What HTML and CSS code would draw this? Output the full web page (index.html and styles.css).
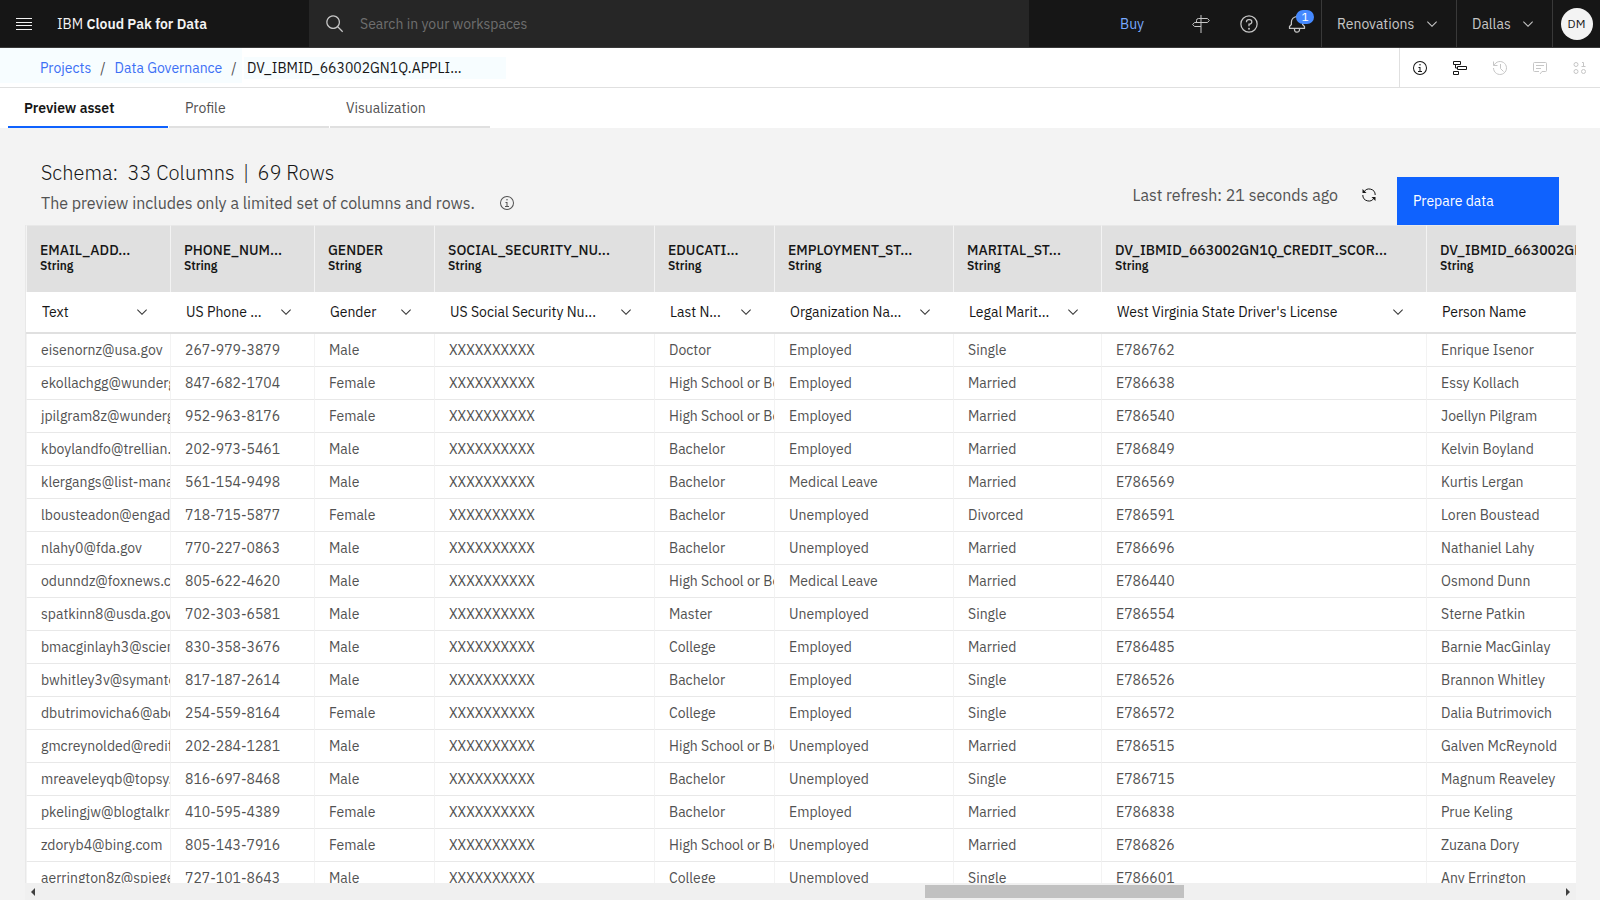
FILE: index.html
```html
<!DOCTYPE html>
<html lang="en">
<head>
<meta charset="utf-8">
<title>IBM Cloud Pak for Data</title>
<link rel="stylesheet" href="styles.css">
</head>
<body>
<svg class="defs" aria-hidden="true">
  <symbol id="chevron" viewBox="0 0 32 32"><path d="M16 22L6 12 7.4 10.6 16 19.2 24.6 10.6 26 12z"/></symbol>
  <symbol id="info" viewBox="0 0 32 32"><path d="M17 22v-8h-4v2h2v6h-3v2h8v-2zM16 8a1.5 1.5 0 1 0 1.5 1.5A1.5 1.5 0 0 0 16 8z"/><path d="M16 30a14 14 0 1 1 14-14 14 14 0 0 1-14 14zm0-26a12 12 0 1 0 12 12A12 12 0 0 0 16 4z"/></symbol>
</svg>
<header class="topbar">
  <div class="brand-area">
    <button class="menu" aria-label="Menu"><svg width="16" height="12"><path d="M0 0h16v1H0zM0 4h16v1H0zM0 7h16v1H0zM0 11h16v1H0z"/></svg></button>
    <a class="brand" href="#">IBM <b>Cloud Pak for Data</b></a>
  </div>
  <label class="search">
    <svg width="20" height="20" viewBox="0 0 32 32"><path d="M29 27.586l-7.552-7.552a11.018 11.018 0 1 0-1.414 1.414L27.586 29zM4 13a9 9 0 1 1 9 9 9.01 9.01 0 0 1-9-9z"/></svg>
    <input type="text" placeholder="Search in your workspaces" aria-label="Search in your workspaces">
  </label>
  <a class="buy" href="#">Buy</a>
  <nav class="top-actions">
    <button aria-label="Directions"><svg width="20" height="20" viewBox="0 0 20 20" class="line"><path d="M10 1v18M10 4.500h6.500l1.800 2-1.800 2H3.500l-1.800 2 1.800 2H10M5.500 8.500v-2q0-2 2-2H10M10 12.500"/></svg></button>
    <button aria-label="Help"><svg width="20" height="20" viewBox="0 0 32 32"><path d="M16 2a14 14 0 1 0 14 14A14 14 0 0 0 16 2zm0 26a12 12 0 1 1 12-12 12 12 0 0 1-12 12z"/><circle cx="16" cy="23.500" r="1.500"/><path d="M17 8h-1.500a4.490 4.490 0 0 0-4.500 4.500v.5h2v-.5a2.500 2.500 0 0 1 2.500-2.500H17a2.500 2.500 0 0 1 0 5h-2v4.500h2V17a4.500 4.500 0 0 0 0-9z"/></svg></button>
    <button class="bell" aria-label="Notifications"><svg width="20" height="20" viewBox="0 0 32 32"><path d="M28.707 19.293L26 16.586V13a10.014 10.014 0 0 0-9-9.950V1h-2v2.050A10.014 10.014 0 0 0 6 13v3.586l-2.707 2.707A1 1 0 0 0 3 20v3a1 1 0 0 0 1 1h7v.777a5.152 5.152 0 0 0 4.500 5.199A5.006 5.006 0 0 0 21 25v-1h7a1 1 0 0 0 1-1v-3a1 1 0 0 0-.293-.707zM19 25a3 3 0 0 1-6 0v-1h6zm8-3H5v-1.586l2.707-2.707A1 1 0 0 0 8 17v-4a8 8 0 0 1 16 0v4a1 1 0 0 0 .293.707L27 20.414z"/></svg><span class="badge">1</span></button>
  </nav>
  <div class="picker account"><select aria-label="Account"><option>Renovations</option></select><svg width="16" height="16"><use href="#chevron"/></svg></div>
  <div class="picker region"><select aria-label="Region"><option>Dallas</option></select><svg width="16" height="16"><use href="#chevron"/></svg></div>
  <div class="profile"><button class="avatar" aria-label="Profile">DM</button></div>
</header>

<div class="crumbbar">
  <nav class="crumbs" aria-label="Breadcrumb">
    <div class="trail"><a href="#">Projects</a><span>/</span><a href="#">Data Governance</a><span>/</span></div>
    <div class="current">DV_IBMID_663002GN1Q.APPLI...</div>
  </nav>
  <div class="tools">
    <button aria-label="Information"><svg width="16" height="16"><use href="#info"/></svg></button>
    <button aria-label="Flow"><svg width="16" height="16" class="line"><path d="M1.500 1.500h7v3h-7zM5.500 6.500h9v3h-9zM1.500 11.500h5v3h-5zM3.500 4.500v3.500h2"/></svg></button>
    <button disabled aria-label="History"><svg width="16" height="16" class="line"><path d="M1.500 1.500v4h4M2 5.500a6.500 6.500 0 1 1-.5 2.500M8.500 4v4.500l3 3"/></svg></button>
    <button disabled aria-label="Comments"><svg width="16" height="16" class="line"><path d="M8 14l2-2.500h3.500a1 1 0 0 0 1-1v-7a1 1 0 0 0-1-1h-11a1 1 0 0 0-1 1v7a1 1 0 0 0 1 1H7M4 5.500h8M4 8.500h5"/></svg></button>
    <button disabled aria-label="Data"><svg width="16" height="16" class="line"><circle cx="4" cy="4.500" r="2"/><circle cx="4" cy="11.500" r="2"/><circle cx="11.500" cy="11.500" r="2"/><path d="M10 2.500h1.500v4M9.500 6.500h4"/></svg></button>
  </div>
</div>

<nav class="tabs">
  <button class="tab active">Preview asset</button>
  <button class="tab">Profile</button>
  <button class="tab">Visualization</button>
</nav>

<main class="content">
  <div class="summary">
    <div class="summary-text">
      <h1>Schema:&nbsp; 33 Columns <span class="bar">|</span> 69 Rows</h1>
      <p>The preview includes only a limited set of columns and rows. <svg width="16" height="16"><use href="#info"/></svg></p>
    </div>
    <div class="refresh">
      <span>Last refresh: 21 seconds ago</span>
      <button aria-label="Refresh"><svg width="16" height="16" class="line"><path d="M3 5A6 6 0 0 1 14.200 8M13 11A6 6 0 0 1 1.800 8"/><path d="M1.500 2v4h4z M14.500 14v-4h-4z" fill="currentColor" stroke="none"/></svg></button>
    </div>
    <button class="primary">Prepare data</button>
  </div>
  <div class="grid">
    <table>
      <colgroup><col class="w144"><col class="w144"><col class="w120"><col class="w220"><col class="w120"><col class="w179"><col class="w148"><col class="w325"><col class="w240"></colgroup>
      <thead><tr class="names" id="names"></tr><tr class="types" id="types"></tr></thead>
      <tbody id="rows"></tbody>
    </table>
  </div>
  <div class="scrollbar" aria-hidden="true"><i class="arrow left"></i><i class="thumb"></i><i class="arrow right"></i></div>
</main>
<script src="table.js"></script>
</body>
</html>
```

FILE: styles.css
```css
* { box-sizing: border-box; }
body {
  margin: 0;
  height: 100vh;
  display: flex;
  flex-direction: column;
  overflow: hidden;
  background: #f3f3f3;
  color: #161616;
  font: 14px/18px "IBM Plex Sans", "Noto Sans", sans-serif;
}
button, select, input { font: inherit; color: inherit; background: none; border: 0; padding: 0; margin: 0; border-radius: 0; }
select { appearance: none; outline: 0; }
a { text-decoration: none; }
svg { display: block; fill: currentColor; flex: none; }
svg.line { fill: none; stroke: currentColor; stroke-width: 1; }
.defs { position: absolute; width: 0; height: 0; }

.topbar { display: flex; flex: none; height: 48px; background: #161616; color: #c6c6c6; border-bottom: 1px solid #393939; }
.brand-area { display: flex; align-items: center; width: 309px; }
.menu { width: 48px; height: 47px; display: grid; place-items: center; color: #f3f3f3; }
.brand { margin-left: 9px; color: #f3f3f3; }
.brand b { font-weight: 600; }
.search { flex: 1; display: flex; align-items: center; gap: 15px; padding-left: 16px; background: #262626; }
.search input { flex: 1; outline: 0; }
.search input::placeholder { color: #6f6f6f; opacity: 1; }
.buy { width: 148px; display: flex; align-items: center; padding-left: 91px; color: #78a9ff; }
.top-actions { display: flex; }
.top-actions button { width: 48px; display: grid; place-items: center; }
.bell { position: relative; }
.badge { position: absolute; left: 23px; top: 10px; width: 18px; height: 14px; border-radius: 7px; background: #4589ff; color: #fff; font-size: 12px; line-height: 14px; text-align: center; }
.picker { display: grid; align-items: center; border-left: 1px solid #393939; }
.picker select, .picker svg { grid-area: 1 / 1; }
.picker select { height: 47px; padding-left: 15px; width: 100%; }
.picker svg { justify-self: end; margin-right: 16px; pointer-events: none; }
.account { width: 135px; }
.region { width: 96px; }
.profile { width: 48px; border-left: 1px solid #393939; display: grid; place-items: center; }
.avatar { width: 32px; height: 32px; border-radius: 50%; background: #f3f3f3; color: #161616; font-size: 12px; }

.crumbbar { display: flex; flex: none; justify-content: space-between; height: 40px; background: #fff; border-bottom: 1px solid #e0e0e0; }
.crumbs { display: flex; align-items: center; gap: 2px; }
.trail { display: flex; align-items: center; gap: 9px; height: 35px; width: 242px; padding: 4px 0 0 40px; background: #f7fdff; color: #525252; align-self: flex-start; }
.trail a { color: #3d70f5; }
.current { width: 262px; padding: 2px 3px; line-height: 18px; background: #f7fdff; }
.tools { display: flex; border-left: 1px solid #e0e0e0; }
.tools button { width: 40px; display: grid; place-items: center; }
.tools button:disabled { color: #c6c6c6; }

.tabs { display: flex; flex: none; gap: 1px; padding-left: 8px; background: #fff; }
.tab { width: 160px; height: 40px; padding: 2px 0 0 16px; text-align: left; color: #525252; border-bottom: 2px solid #e0e0e0; }
.tab.active { color: #161616; font-weight: 600; border-color: #0f62fe; }

.content { flex: 1; min-height: 0; display: flex; flex-direction: column; padding: 0 24px 0 25px; }
.summary { display: flex; flex: none; height: 97px; padding-right: 17px; align-items: flex-end; }
.summary-text { flex: 1; padding: 0 0 10px 16px; }
.summary h1 { margin: 0 0 6px; font-size: 20px; line-height: 24px; font-weight: 300; }
.bar { margin: 0 4px; }
.summary p { display: flex; align-items: center; gap: 24px; margin: 0; font-size: 16px; line-height: 24px; color: #525252; }
.refresh { display: flex; align-items: center; gap: 23px; padding: 0 20px 18px 0; font-size: 16px; line-height: 24px; color: #525252; }
.refresh button { color: #161616; }
.primary { width: 162px; height: 48px; padding-left: 16px; text-align: left; background: #0f62fe; color: #fff; }

.grid { flex: 1; min-height: 0; overflow: hidden; background: #fff; border-left: 1px solid #e8e8e8; }
table { table-layout: fixed; border-collapse: separate; border-spacing: 0; width: 1640px; }
.w120 { width: 120px; }
.w144 { width: 144px; }
.w148 { width: 148px; }
.w179 { width: 179px; }
.w220 { width: 220px; }
.w240 { width: 240px; }
.w325 { width: 325px; }
th, td { padding: 0; text-align: left; white-space: nowrap; overflow: hidden; font-weight: 400; }
.names th { height: 67px; padding: 16px 0 0 13px; vertical-align: top; background: #e0e0e0; border-top: 1px solid #e8e8e8; border-left: 1px solid #f3f3f3; font-weight: 500; line-height: 16px; }
.names small { display: block; font-size: 12px; font-weight: 600; }
.types th { height: 42px; border-bottom: 2px solid #e0e0e0; }
.kind { display: grid; align-items: center; }
.kind select, .kind svg { grid-area: 1 / 1; }
.kind select { height: 40px; padding-left: 16px; }
.kind svg { justify-self: end; margin-right: 20px; color: #393939; pointer-events: none; }
td { height: 33px; padding-left: 14px; line-height: 30px; color: #525252; border-left: 1px solid #f3f3f3; border-bottom: 1px solid #e8e8e8; }

.scrollbar { display: flex; flex: none; align-items: center; height: 17px; background: #f0f0f0; }
.arrow { border: 4px solid transparent; }
.arrow.left { border-left: 0; border-right: 4px solid #404040; margin-left: 6px; }
.arrow.right { border-right: 0; border-left: 4px solid #404040; margin: 0 6px 0 auto; }
.thumb { width: 16.7%; height: 13px; margin-left: 57.4%; background: #c1c1c1; }
```

FILE: table.js
```js
const columns = [
  ["EMAIL_ADD...", "Text"],
  ["PHONE_NUM...", "US Phone ..."],
  ["GENDER", "Gender"],
  ["SOCIAL_SECURITY_NU...", "US Social Security Nu..."],
  ["EDUCATI...", "Last N..."],
  ["EMPLOYMENT_ST...", "Organization Na..."],
  ["MARITAL_ST...", "Legal Marit..."],
  ["DV_IBMID_663002GN1Q_CREDIT_SCOR...", "West Virginia State Driver's License"],
  ["DV_IBMID_663002GN1Q_CUSTOMER", "Person Name"]
];
const records = `eisenornz@usa.gov|267-979-3879|Male|Doctor|Employed|Single|E786762|Enrique Isenor
ekollachgg@wunderground.com|847-682-1704|Female|High School or Below|Employed|Married|E786638|Essy Kollach
jpilgram8z@wunderground.com|952-963-8176|Female|High School or Below|Employed|Married|E786540|Joellyn Pilgram
kboylandfo@trellian.com|202-973-5461|Male|Bachelor|Employed|Married|E786849|Kelvin Boyland
klergangs@list-manage.com|561-154-9498|Male|Bachelor|Medical Leave|Married|E786569|Kurtis Lergan
lbousteadon@engadget.com|718-715-5877|Female|Bachelor|Unemployed|Divorced|E786591|Loren Boustead
nlahy0@fda.gov|770-227-0863|Male|Bachelor|Unemployed|Married|E786696|Nathaniel Lahy
odunndz@foxnews.com|805-622-4620|Male|High School or Below|Medical Leave|Married|E786440|Osmond Dunn
spatkinn8@usda.gov|702-303-6581|Male|Master|Unemployed|Single|E786554|Sterne Patkin
bmacginlayh3@sciencedaily.com|830-358-3676|Male|College|Employed|Married|E786485|Barnie MacGinlay
bwhitley3v@symantec.com|817-187-2614|Male|Bachelor|Employed|Single|E786526|Brannon Whitley
dbutrimovicha6@about.com|254-559-8164|Female|College|Employed|Single|E786572|Dalia Butrimovich
gmcreynolded@rediff.com|202-284-1281|Male|High School or Below|Unemployed|Married|E786515|Galven McReynold
mreaveleyqb@topsy.com|816-697-8468|Male|Bachelor|Unemployed|Single|E786715|Magnum Reaveley
pkelingjw@blogtalkradio.com|410-595-4389|Female|Bachelor|Employed|Married|E786838|Prue Keling
zdoryb4@bing.com|805-143-7916|Female|High School or Below|Unemployed|Married|E786826|Zuzana Dory
aerrington8z@spiegel.de|727-101-8643|Male|College|Unemployed|Single|E786601|Any Errington`;

document.getElementById("names").innerHTML = columns
  .map(([name]) => `<th scope="col">${name}<small>String</small></th>`).join("");
document.getElementById("types").innerHTML = columns
  .map(([name, kind]) => `<th><div class="kind"><select aria-label="Class of ${name}"><option>${kind}</option></select><svg width="16" height="16"><use href="#chevron"/></svg></div></th>`).join("");
document.getElementById("rows").innerHTML = records.split("\n").map(line => {
  const cells = line.split("|");
  cells.splice(3, 0, "XXXXXXXXXX");
  return `<tr>${cells.map(text => `<td>${text}</td>`).join("")}</tr>`;
}).join("");
```
